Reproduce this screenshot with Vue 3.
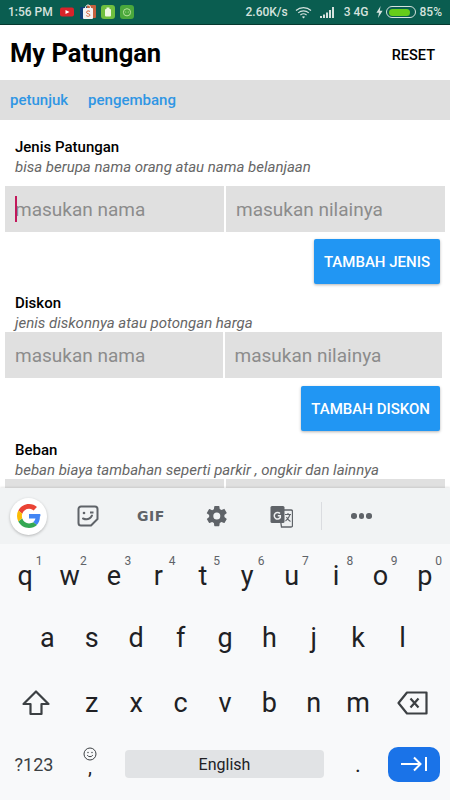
<template>
  <div class="page">
    <div class="status-bar">
      <span class="time">1:56 PM</span>
      <div class="notif">
        <svg width="16" height="14" viewBox="0 0 16 14"><rect x="1" y="2.500" width="14" height="9" rx="2" fill="#d9232a" /><path d="M6.500 5l4 2-4 2z" fill="#fff" /></svg>
        <svg width="16" height="16" viewBox="0 0 16 16"><rect x="0" y="3" width="10" height="12" rx="1" fill="#0f3f78" /><rect x="7" y="1" width="9" height="13" rx="1" fill="#c4623f" /><rect x="3" y="4" width="10" height="11" rx="1" fill="#f3f3f3" /><path d="M5.500 4c0-4 5-4 5 0" fill="none" stroke="#f3f3f3" stroke-width="1" /><path d="M10 7.500c-1-1-3.500-.8-3.500.8 0 1.800 3.500 1 3.500 2.800 0 1.500-2.700 1.500-3.800.5" fill="none" stroke="#d9653e" stroke-width="1" /></svg>
        <svg width="14" height="14" viewBox="0 0 14 14"><rect width="14" height="14" rx="3" fill="#6fbf3f" /><rect x="4" y="4" width="6" height="7.500" rx="1" fill="#eef7e4" /><rect x="5.500" y="2.500" width="3" height="2" fill="#eef7e4" /></svg>
        <svg width="14" height="14" viewBox="0 0 14 14"><rect width="14" height="14" rx="3" fill="#4aa83c" /><circle cx="7" cy="7.300" r="3.600" fill="none" stroke="#b6e29c" stroke-width="1" /><circle cx="5.700" cy="7" r=".6" fill="#b6e29c" /><circle cx="8.300" cy="7" r=".6" fill="#b6e29c" /></svg>
      </div>
      <div class="status-right">
        <span>2.60K/s</span>
        <svg class="wifi" width="17" height="13" viewBox="0 0 17 13" fill="none" stroke="#d5e2de" stroke-width="1.100"><path d="M1 4.500c4.200-3.800 10.800-3.800 15 0" /><path d="M3.200 6.800c3-2.600 7.600-2.600 10.600 0" /><path d="M5.400 9c1.800-1.500 4.400-1.500 6.200 0" /><path d="M8.500 12.500L6.900 10.700c.9-.7 2.300-.7 3.200 0z" fill="#d5e2de" stroke="none" /></svg>
        <svg class="signal" width="16" height="11" viewBox="0 0 16 11" fill="#d5e2de"><rect x="0" y="9" width="2" height="2" /><rect x="3" y="7.500" width="2" height="3.500" /><rect x="6" y="5.500" width="2" height="5.500" /><rect x="9" y="3" width="2" height="8" /><rect x="12" y="0" width="2" height="11" /></svg>
        <span class="net">3 4G</span>
        <svg class="bolt" width="7" height="12" viewBox="0 0 7 12"><path d="M4.600 0L0.400 6.800h2.600L2 12l4.600-7.200H3.800z" fill="#d5e2de" /></svg>
        <div class="battery"><div class="battery-fill"></div></div>
        <span>85%</span>
      </div>
    </div>

    <header class="app-bar">
      <h1>My Patungan</h1>
      <span class="reset">RESET</span>
    </header>

    <nav class="tabs">
      <a>petunjuk</a>
      <a>pengembang</a>
    </nav>

    <main class="content">
      <section class="block block-jenis">
        <h2>Jenis Patungan</h2>
        <p class="hint">bisa berupa nama orang atau nama belanjaan</p>
        <div class="inputs">
          <div class="field"><i class="caret"></i>masukan nama</div>
          <div class="field">masukan nilainya</div>
        </div>
        <div class="actions"><button class="btn">TAMBAH JENIS</button></div>
      </section>

      <section class="block block-diskon">
        <h2>Diskon</h2>
        <p class="hint">jenis diskonnya atau potongan harga</p>
        <div class="inputs">
          <div class="field">masukan nama</div>
          <div class="field">masukan nilainya</div>
        </div>
        <div class="actions"><button class="btn">TAMBAH DISKON</button></div>
      </section>

      <section class="block block-beban">
        <h2>Beban</h2>
        <p class="hint">beban biaya tambahan seperti parkir , ongkir dan lainnya</p>
        <div class="inputs">
          <div class="field"></div>
          <div class="field"></div>
        </div>
      </section>
    </main>

    <div class="keyboard">
      <div class="toolbar">
        <div class="g-logo">
          <svg width="24" height="24" viewBox="0 0 48 48">
            <path fill="#ea4335" d="M24 9.500c3.500 0 6.700 1.300 9.100 3.500l6.800-6.800C35.800 2.400 30.300 0 24 0 14.600 0 6.500 5.400 2.600 13.200l7.900 6.200C12.400 13.700 17.700 9.500 24 9.500z" />
            <path fill="#4285f4" d="M46.900 24.500c0-1.600-.1-3.100-.4-4.500H24v9h12.900c-.6 3-2.200 5.500-4.700 7.200l7.300 5.700c4.300-4 6.400-9.900 6.400-17.400z" />
            <path fill="#fbbc05" d="M10.500 28.600c-.5-1.500-.8-3-.8-4.600s.3-3.200.8-4.600l-7.900-6.200C.9 16.500 0 20.100 0 24s.9 7.500 2.600 10.800l7.900-6.200z" />
            <path fill="#34a853" d="M24 48c6.500 0 11.900-2.100 15.900-5.800l-7.300-5.700c-2.100 1.400-4.900 2.300-8.600 2.300-6.300 0-11.600-4.200-13.500-9.900l-7.900 6.200C6.500 42.600 14.600 48 24 48z" />
          </svg>
        </div>
        <svg class="tool-sticker" width="22" height="22" viewBox="0 0 22 22" fill="none" stroke="#5f6368" stroke-width="2"><path d="M4 1.500h14a2.500 2.500 0 0 1 2.500 2.500v10l-6.500 6.500H4A2.500 2.500 0 0 1 1.500 18V4A2.500 2.500 0 0 1 4 1.500z" stroke-linejoin="round" /><circle cx="7" cy="8" r="1.300" fill="#5f6368" stroke="none" /><path d="M13 7.500h3.500" /><path d="M6 13.500c3.500 1.500 7 .5 9-3" stroke-linecap="round" /></svg>
        <span class="gif">GIF</span>
        <svg class="tool-gear" width="24" height="24" viewBox="0 0 24 24"><path fill="#5f6368" d="M19.400 13c.04-.32.06-.66.06-1s-.02-.68-.07-1l2.160-1.680a.5.5 0 0 0 .12-.65l-2.050-3.540a.5.5 0 0 0-.62-.22l-2.550 1.020a7.500 7.500 0 0 0-1.730-1l-.38-2.700A.5.5 0 0 0 13.840 2H9.760a.5.5 0 0 0-.5.43l-.38 2.700c-.62.26-1.200.6-1.730 1L4.600 5.110a.5.500 0 0 0-.62.22L1.930 8.870a.5.500 0 0 0 .12.650L4.200 11c-.04.320-.07.660-.07 1s.03.680.07 1l-2.150 1.680a.5.500 0 0 0-.12.650l2.050 3.540c.12.220.39.300.62.220l2.550-1.020c.53.400 1.110.740 1.730 1l.38 2.700c.04.250.25.430.5.430h4.080c.25 0 .46-.18.500-.43l.38-2.700c.62-.26 1.200-.6 1.730-1l2.550 1.020c.23.080.5 0 .62-.22l2.050-3.540a.5.500 0 0 0-.12-.65zM11.800 15.500a3.500 3.500 0 1 1 0-7 3.500 3.500 0 0 1 0 7z" /></svg>
        <svg class="tool-translate" width="23" height="23" viewBox="0 0 23 23"><path d="M9 5h12a1.500 1.500 0 0 1 1.500 1.500v14A1.500 1.500 0 0 1 21 22H11.500z" fill="#eef0f1" stroke="#5f6368" stroke-width="1.300" /><rect x="0.500" y="1" width="14" height="17" rx="1.500" fill="#5f6368" /><path d="M10 8.500A3.300 3.300 0 1 0 10.300 12.500V10.800H7.800" fill="none" stroke="#eef0f1" stroke-width="1.500" /><path d="M15 9.500h6M18 8v1.500M20 9.500c-.8 3-2.500 5-4.500 6.500M16.500 12c.8 2 2.200 3.500 4 4.500" fill="none" stroke="#5f6368" stroke-width="1.100" /></svg>
        <i class="divider"></i>
        <div class="dots"><i></i><i></i><i></i></div>
      </div>

      <div class="keys">
        <div class="row row-1">
          <div v-for="k in topRow" :key="k.c" class="key"><sup>{{ k.n }}</sup>{{ k.c }}</div>
        </div>
        <div class="row row-2">
          <div v-for="c in midRow" :key="c" class="key">{{ c }}</div>
        </div>
        <div class="row row-3">
          <div class="key wide">
            <svg width="30" height="28" viewBox="0 0 30 28" fill="none" stroke="#3c4043" stroke-width="2.200" stroke-linejoin="round"><path d="M15 2.500L2.500 15H9.500V25H20.500V15H27.500z" /></svg>
          </div>
          <div v-for="c in lowRow" :key="c" class="key">{{ c }}</div>
          <div class="key wide">
            <svg width="32" height="26" viewBox="0 0 32 26" fill="none" stroke="#3c4043" stroke-width="2.200" stroke-linejoin="round"><path d="M10 2.500H29.500V23.500H10L1.500 13z" /><path d="M13.500 8.500l8 9M21.500 8.500l-8 9" /></svg>
          </div>
        </div>
        <div class="row row-4">
          <div class="key wide sym">?123</div>
          <div class="key comma">
            <svg width="14" height="14" viewBox="0 0 14 14" fill="none" stroke="#3c4043" stroke-width="1"><circle cx="7" cy="7" r="6" /><circle cx="5" cy="5.500" r=".7" fill="#3c4043" stroke="none" /><circle cx="9" cy="5.500" r=".7" fill="#3c4043" stroke="none" /><path d="M4.200 8.200c1.400 2 4.200 2 5.600 0" /></svg>
            <span>,</span>
          </div>
          <div class="space">English</div>
          <div class="key period">.</div>
          <div class="enter">
            <svg width="28" height="16" viewBox="0 0 28 16" fill="none" stroke="#fff" stroke-width="2"><path d="M1 8H20" /><path d="M14 1.500L20.500 8 14 14.500" /><path d="M26 1v14" /></svg>
          </div>
        </div>
      </div>
    </div>
  </div>
</template>

<script setup>
const topRow = [
  { c: 'q', n: 1 }, { c: 'w', n: 2 }, { c: 'e', n: 3 }, { c: 'r', n: 4 }, { c: 't', n: 5 },
  { c: 'y', n: 6 }, { c: 'u', n: 7 }, { c: 'i', n: 8 }, { c: 'o', n: 9 }, { c: 'p', n: 0 }
];
const midRow = ['a', 's', 'd', 'f', 'g', 'h', 'j', 'k', 'l'];
const lowRow = ['z', 'x', 'c', 'v', 'b', 'n', 'm'];
</script>

<style scoped>
.page {
  width: 450px;
  height: 800px;
  display: flex;
  flex-direction: column;
  overflow: hidden;
  background: #fff;
  font-family: Roboto, "Liberation Sans", sans-serif;
}
.status-bar {
  height: 24px;
  flex: none;
  display: flex;
  align-items: center;
  padding: 0 8px;
  background: #0a5d50;
  border-bottom: 1px solid #06382f;
  color: #d5e2de;
  font-size: 12px;
  font-weight: 500;
}
.notif {
  display: flex;
  align-items: center;
  gap: 5px;
  margin-left: 6px;
}
.status-right {
  margin-left: auto;
  display: flex;
  align-items: center;
}
.wifi { margin-left: 7px; }
.signal { margin-left: 8px; }
.net { margin-left: 8px; }
.bolt { margin-left: 7px; }
.battery {
  width: 30px;
  height: 12px;
  margin: 0 4px 0 3px;
  padding: 1.500px 2px;
  box-sizing: border-box;
  border: 1px solid #d5e2de;
  border-radius: 6px;
}
.battery-fill {
  width: 90%;
  height: 100%;
  background: #66cc1a;
  border-radius: 4px;
}
.app-bar {
  height: 55px;
  flex: none;
  display: flex;
  align-items: center;
  justify-content: space-between;
  padding: 0 15px 0 10px;
}
h1 {
  margin: 1px 0 0;
  font-size: 25.500px;
  font-weight: 700;
  color: #000;
}
.reset {
  font-size: 14.500px;
  font-weight: 500;
  color: #000;
  margin-top: 6px;
}
.tabs {
  height: 40px;
  flex: none;
  display: flex;
  align-items: center;
  gap: 20px;
  padding-left: 10px;
  background: #dfdfdf;
  color: #2f96e4;
  font-size: 15px;
  font-weight: 500;
}
.content {
  flex: 1;
  min-height: 0;
  overflow: hidden;
}
.block h2 {
  margin: 0 0 0 15px;
  font-size: 15px;
  line-height: 20px;
  font-weight: 500;
  color: #000;
}
.hint {
  margin: 0 0 0 15px;
  font-size: 15px;
  line-height: 20px;
  font-style: italic;
  color: #666;
}
.inputs {
  display: flex;
  gap: 2px;
  padding: 0 5px;
}
.field {
  flex: 1;
  height: 46px;
  display: flex;
  align-items: center;
  padding-left: 10px;
  position: relative;
  background: #e0e0e0;
  color: #8c8c8c;
  font-size: 19px;
}
.caret {
  position: absolute;
  left: 10px;
  top: 10px;
  width: 2px;
  height: 26px;
  background: #c2185b;
}
.actions {
  display: flex;
  justify-content: flex-end;
  padding: 7px 10px 0 0;
}
.btn {
  height: 45px;
  padding: 0 10px;
  border: 0;
  border-radius: 2px;
  background: #2196f3;
  color: #fff;
  font-family: inherit;
  font-size: 15px;
  font-weight: 500;
  box-shadow: 0 1px 3px rgba(0, 0, 0, 0.3);
}
.block-jenis { padding-top: 17px; }
.block-jenis .hint { margin-bottom: 9px; }
.block-diskon { padding-top: 9px; }
.block-diskon .inputs { padding-right: 8px; }
.block-diskon .hint { margin-bottom: -1px; }
.block-diskon .actions { padding-top: 8px; }
.block-beban { padding-top: 9px; }
.block-beban .hint { margin-bottom: -1px; }
.keyboard {
  height: 312px;
  flex: none;
  position: relative;
  background: #f8f9fa;
  box-shadow: 0 -1px 2px rgba(0, 0, 0, 0.1);
}
.toolbar {
  height: 56px;
  display: flex;
  align-items: center;
  background: #f1f3f4;
}
.g-logo {
  width: 37px;
  height: 37px;
  margin-left: 10px;
  display: flex;
  align-items: center;
  justify-content: center;
  background: #fff;
  border-radius: 50%;
  box-shadow: 0 1px 3px rgba(0, 0, 0, 0.25);
}
.tool-sticker { margin-left: 30px; }
.gif {
  width: 30px;
  margin-left: 38px;
  color: #5f6368;
  font-family: "DejaVu Sans", sans-serif;
  font-size: 14px;
  font-weight: 700;
  letter-spacing: 0.5px;
}
.tool-gear { margin-left: 38px; }
.tool-translate { margin-left: 41px; }
.divider {
  width: 1px;
  height: 28px;
  margin-left: 28px;
  background: #dadce0;
}
.dots {
  display: flex;
  gap: 2px;
  margin-left: 29px;
}
.dots i {
  width: 5.500px;
  height: 5.500px;
  border-radius: 50%;
  background: #5f6368;
}
.keys {
  height: 256px;
  display: flex;
  flex-direction: column;
  color: #000;
}
.row {
  display: flex;
  align-items: center;
  justify-content: center;
}
.row-1 { height: 63px; }
.row-2 { height: 62px; }
.row-3 { height: 67px; padding-right: 2px; }
.row-4 { height: 56px; }
.key {
  width: 44.400px;
  height: 100%;
  flex: none;
  display: flex;
  align-items: center;
  justify-content: center;
  position: relative;
  font-size: 27px;
  color: #202124;
}
.key sup {
  position: absolute;
  top: 10px;
  right: 5px;
  font-size: 12px;
  line-height: 14px;
  color: #5f6368;
}
.key.wide { width: 68px; }
.row-3 .key.wide:last-child { width: 66px; }
.row-4 {
  justify-content: flex-start;
}
.sym {
  font-size: 18px;
  color: #3c4043;
}
.comma {
  flex-direction: column;
  font-size: 20px;
  line-height: 12px;
  width: 44px;
  padding-bottom: 6px;
  box-sizing: border-box;
}
.comma span { height: 14px; }
.space {
  width: 199px;
  height: 28px;
  margin-left: 13px;
  display: flex;
  align-items: center;
  justify-content: center;
  background: #e1e3e5;
  border-radius: 4px;
  font-size: 16px;
  color: #202124;
}
.period {
  width: 68px;
  font-size: 22px;
}
.enter {
  width: 52px;
  height: 35px;
  margin-left: -4px;
  display: flex;
  align-items: center;
  justify-content: center;
  background: #1a73e8;
  border-radius: 10px;
}
</style>
